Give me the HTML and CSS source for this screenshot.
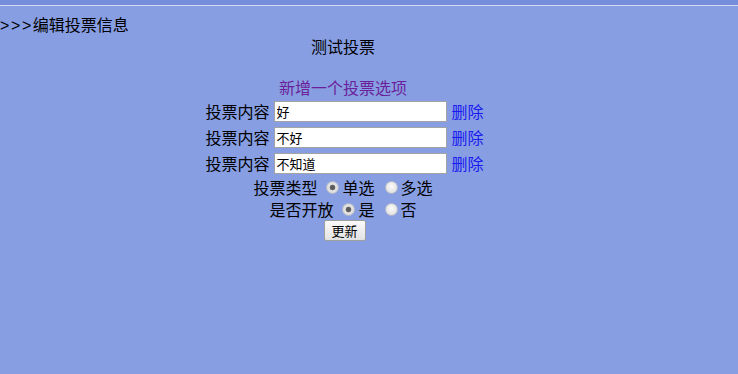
FILE: index.html
```html
<!DOCTYPE html>
<html lang="zh-CN">
	<head>
		<meta charset="UTF-8">
		<link rel="stylesheet" href="styles.css">
		<title>编辑投票信息</title>
	</head>
	<body>
		<div class="topbar"></div>
		<div class="crumb"><span class="arrows">&gt;&gt;&gt;</span>编辑投票信息</div>
		<div class="main">
			<div class="title">测试投票</div>
			<div class="add"><a href="#">新增一个投票选项</a></div>
			<form>
				<div class="row"><span class="lbl">投票内容</span><input type="text" class="opt" value="好"><a href="#" class="del">删除</a></div>
				<div class="row"><span class="lbl">投票内容</span><input type="text" class="opt" value="不好"><a href="#" class="del">删除</a></div>
				<div class="row"><span class="lbl">投票内容</span><input type="text" class="opt" value="不知道"><a href="#" class="del">删除</a></div>
				<div class="line"><span class="name">投票类型</span><input type="radio" name="type" checked><span class="choice">单选</span><input type="radio" name="type"><span>多选</span></div>
				<div class="line"><span class="name">是否开放</span><input type="radio" name="open" checked><span class="choice">是</span><input type="radio" name="open"><span>否</span></div>
				<div class="btnrow"><button type="button" class="btn">更新</button></div>
			</form>
		</div>
	</body>
</html>
```

FILE: styles.css
```css
body {
	margin: 0;
	background: #879ee2;
	font-family: "Noto Sans CJK SC", "DejaVu Sans", sans-serif;
	font-size: 16px;
	color: #000;
}
.topbar {
	height: 5px;
	background: #768ddb;
	border-bottom: 1px solid #d2d9f4;
}
.crumb {
	height: 22px;
	padding-top: 7px;
	line-height: 22px;
}
.arrows {
	font-family: "Liberation Sans", sans-serif;
	letter-spacing: 1.6px;
}
.main {
	width: 686px;
	text-align: center;
}
.title {
	line-height: 22px;
}
.add {
	margin-top: 19px;
	line-height: 22px;
}
.add a {
	color: #6b1f9a;
	text-decoration: none;
}
.row {
	display: flex;
	justify-content: center;
	align-items: center;
	height: 26px;
	padding-left: 3px;
}
.lbl {
	margin-right: 4px;
}
.opt {
	box-sizing: border-box;
	width: 173px;
	height: 21px;
	margin: 0 5px 0 0;
	padding: 1px 2px;
	border: 1px solid #a3a3a3;
	background: #fff;
	font-family: "Noto Sans CJK SC", sans-serif;
	font-size: 13px;
}
.del {
	color: #1a1af0;
	text-decoration: none;
}
.line {
	display: flex;
	justify-content: center;
	align-items: center;
	height: 22px;
}
.name {
	margin-right: 9px;
}
.choice {
	margin-right: 10px;
}
input[type="radio"] {
	-webkit-appearance: none;
	appearance: none;
	box-sizing: border-box;
	width: 13px;
	height: 13px;
	margin: 1px 3px 0 0;
	border: 1px solid #b8bcc8;
	border-radius: 50%;
	background: radial-gradient(circle at 50% 40%, #fbfbfb, #d9d9d9);
}
input[type="radio"]:checked {
	background: radial-gradient(circle, #555 0, #666 2.5px, #e4e4e4 3.2px, #d6d6d6);
}
.btnrow {
	display: flex;
	justify-content: center;
	padding-left: 3px;
}
.btn {
	box-sizing: border-box;
	width: 42px;
	height: 21px;
	padding: 0;
	border: 1px solid #9e9e9e;
	border-radius: 2px;
	background: linear-gradient(#fafafa, #e2e2e2);
	font-family: "Noto Sans CJK SC", sans-serif;
	font-size: 13px;
	color: #000;
}
```
